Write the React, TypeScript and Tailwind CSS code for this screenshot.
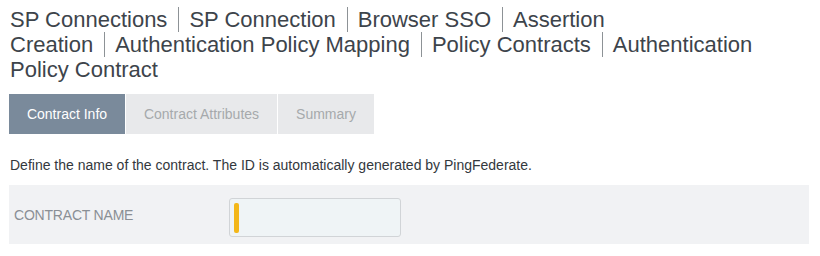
const crumbs = [
  'SP Connections',
  'SP Connection',
  'Browser SSO',
  'Assertion Creation',
  'Authentication Policy Mapping',
  'Policy Contracts',
  'Authentication Policy Contract',
]

const tabs = [
  { label: 'Contract Info', active: true, width: 'w-[116px]' },
  { label: 'Contract Attributes', active: false, width: 'w-[151px]' },
  { label: 'Summary', active: false, width: 'w-[96px]' },
]

export default function App() {
  return (
    <div className="min-h-screen bg-white px-[9px] font-['Liberation_Sans',Arial,sans-serif]">
      {/* breadcrumb title, wraps like inline text */}
      <h1 className="pt-[7px] pl-px text-[22px] leading-[25px] text-[#3d444b]">
        {crumbs.map((c, i) => (
          <span
            key={c}
            className={i === 0 ? '' : 'ml-[11px] border-l border-[#8d9296] pl-[10px]'}
          >
            {c}
          </span>
        ))}
      </h1>

      <div className="mt-[12px] flex gap-px">
        {tabs.map((t) => (
          <div
            key={t.label}
            className={`flex h-[40px] items-center justify-center text-[14px] ${t.width} ${
              t.active ? 'bg-[#7a8a9b] text-white' : 'bg-[#e8e9eb] text-[#a6a9ac]'
            }`}
          >
            {t.label}
          </div>
        ))}
      </div>

      <p className="mt-[23px] pl-px text-[14px] leading-[16px] text-[#33383d]">
        Define the name of the contract. The ID is automatically generated by PingFederate.
      </p>

      <div className="mt-[12px] flex w-[800px] items-center bg-[#f1f2f4] pt-[13px] pb-[7px]">
        <label className="mb-[6px] w-[220px] pl-[5px] text-[14px] leading-[16px] tracking-[-0.2px] text-[#8a8f95]">
          CONTRACT NAME
        </label>
        <div className="flex h-[39px] w-[172px] items-start rounded-[3px] border border-[#d1d4d7] bg-[#eff4f6] pt-[4px] pl-[4px]">
          <div className="h-[30px] w-[5px] rounded-[2px] bg-[#f3b71a]" />
        </div>
      </div>
    </div>
  )
}
